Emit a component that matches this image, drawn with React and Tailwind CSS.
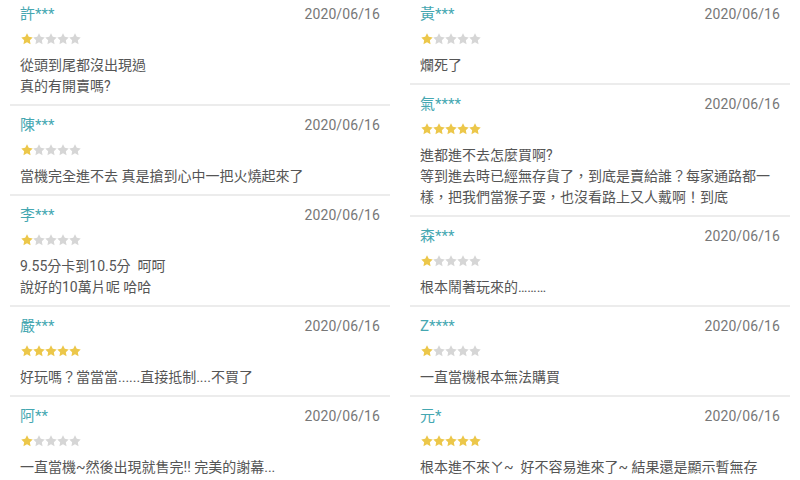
import React from 'react';

const leftReviews = [
  { name: '許***', stars: 1, lines: ['從頭到尾都沒出現過', '真的有開賣嗎?'] },
  { name: '陳***', stars: 1, lines: ['當機完全進不去 真是搶到心中一把火燒起來了'] },
  { name: '李***', stars: 1, lines: ['9.55分卡到10.5分  呵呵', '說好的10萬片呢 哈哈'] },
  { name: '嚴***', stars: 5, lines: ['好玩嗎？當當當......直接抵制....不買了'] },
  { name: '阿**', stars: 1, lines: ['一直當機~然後出現就售完!! 完美的謝幕...'] },
];

const rightReviews = [
  { name: '黃***', stars: 1, lines: ['爛死了'] },
  {
    name: '氣****',
    stars: 5,
    lines: [
      '進都進不去怎麼買啊?',
      '等到進去時已經無存貨了，到底是賣給誰？每家通路都一',
      '樣，把我們當猴子耍，也沒看路上又人戴啊！到底',
    ],
  },
  { name: '森***', stars: 1, lines: ['根本鬧著玩來的………'] },
  { name: 'Z****', stars: 1, lines: ['一直當機根本無法購買'] },
  { name: '元*', stars: 5, lines: ['根本進不來ㄚ~  好不容易進來了~ 結果還是顯示暫無存'] },
];

const Star = ({ on }) => (
  <svg viewBox="1.5 1.5 21 21" className="w-[12px] h-[12px]">
    <path
      d="M12 2l3.09 6.26L22 9.27l-5 4.87 1.18 6.88L12 17.77l-6.18 3.25L7 14.14 2 9.27l6.91-1.01L12 2z"
      fill={on ? '#ecc74a' : '#d6d6d6'}
    />
  </svg>
);

const Review = ({ r }) => (
  <div className="px-[10px] pt-[9px] pb-[7px] border-b-2 border-[#ececec]">
    <div className="flex items-center justify-between h-[20px]">
      <span className="text-[15px] text-[#45a7b1]">{r.name}</span>
      <span className="text-[14px] text-[#777777] tracking-[0.1px]">2020/06/16</span>
    </div>
    <div className="flex items-center h-[12px] mt-[9px] pl-[1px]">
      {[1, 2, 3, 4, 5].map((i) => (
        <Star key={i} on={i <= r.stars} />
      ))}
    </div>
    <div className="mt-[10px] text-[14px] leading-[21px] text-[#555555] whitespace-pre">
      {r.lines.map((l, i) => (
        <div key={i}>{l}</div>
      ))}
    </div>
  </div>
);

export default function App() {
  return (
    <div
      className="w-[800px] h-[480px] overflow-hidden bg-white flex"
      style={{ fontFamily: 'Roboto, "Noto Sans CJK TC", sans-serif' }}
    >
      <div className="w-[400px] px-[10px] -mt-[5px]">
        {leftReviews.map((r, i) => (
          <Review key={i} r={r} />
        ))}
      </div>
      <div className="w-[400px] px-[10px] -mt-[5px]">
        {rightReviews.map((r, i) => (
          <Review key={i} r={r} />
        ))}
      </div>
    </div>
  );
}
